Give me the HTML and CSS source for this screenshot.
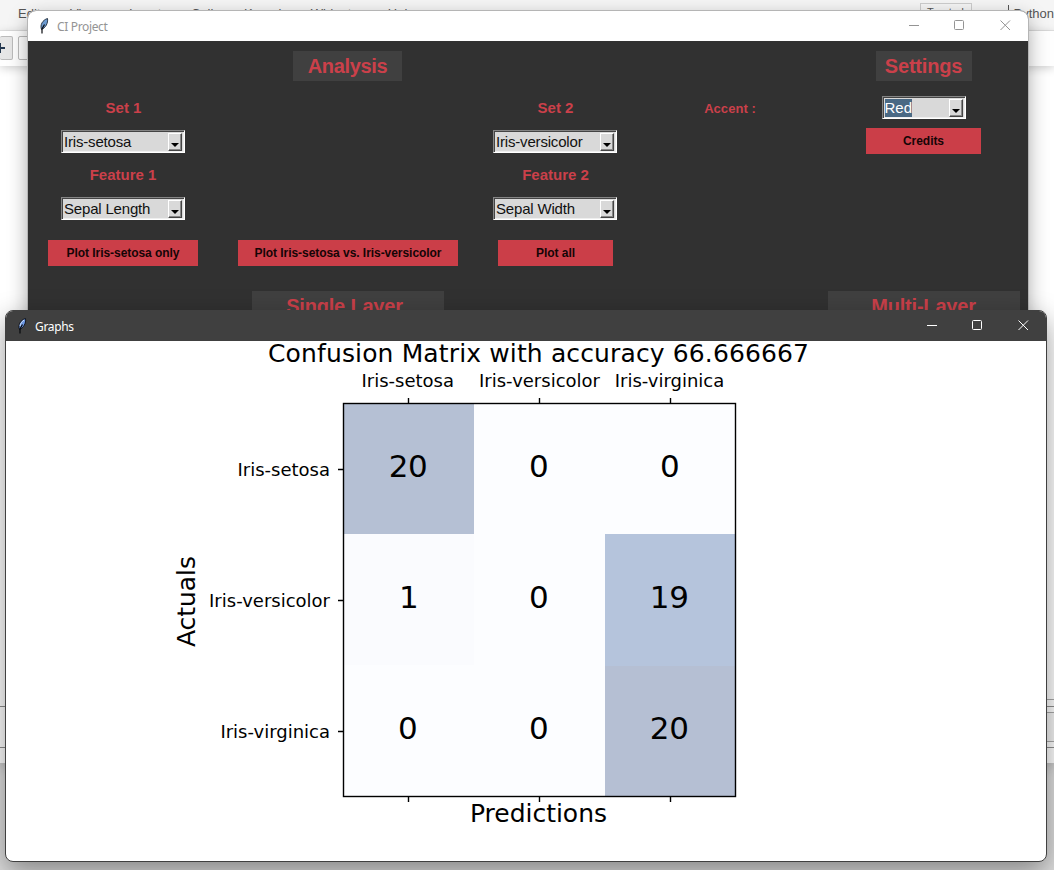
FILE: index.html
```html
<!DOCTYPE html>
<html lang="en">
<head>
<meta charset="utf-8">
<title>CI Project</title>
<link rel="stylesheet" href="styles.css">
</head>
<body>
<div class="desktop">
  <div class="notebook">
    <div class="menubar">
      <span class="m-edit">Edit</span><span class="m-view">View</span><span class="m-insert">Insert</span><span class="m-cell">Cell</span><span class="m-kernel">Kernel</span><span class="m-widgets">Widgets</span><span class="m-help">Help</span>
      <span class="trusted">Trusted</span><span class="kernel-name">Python</span>
    </div>
    <div class="toolbar">
      <span class="tool add"><svg class="plus" viewBox="0 0 12 12"><path d="M-5 6H5M0 1V11"/></svg></span>
      <span class="tool"></span>
    </div>
    <div class="cells"></div>
    <div class="cell-edge"></div>
    <div class="cell-rows"><div class="cell-input"></div></div>
  </div>

  <div class="window app">
    <div class="titlebar">
      <svg class="feather" viewBox="0 0 10 16"><path d="M2.500 11.500C.8 7 3.500 2 8.500.5C9.300 5 6.500 10 2.500 11.500Z" fill="#6c9bd0" stroke="#1c2836" stroke-width=".9"/><path d="M5.500 6.500L3 11V15.500" fill="none" stroke="#090b10" stroke-width="1.200"/></svg>
      <span class="title">CI Project</span>
      <svg class="controls" viewBox="0 0 102 12"><path d="M0 6.500H10M91.500 1.500L101 11M101 1.500L91.500 11"/><rect x="45.500" y="1.500" width="9" height="9" rx="1"/></svg>
    </div>
    <div class="panel">
      <h2 class="heading c2 r1 analysis">Analysis</h2>
      <h2 class="heading c5 r1 settings">Settings</h2>
      <span class="label c1 r2">Set 1</span>
      <span class="label c3 r2">Set 2</span>
      <span class="label small c4 r2">Accent :</span>
      <div class="combo short c5 r2"><span class="value"><mark>Red</mark></span><span class="arrow"></span></div>
      <div class="combo c1 r3"><span class="value">Iris-setosa</span><span class="arrow"></span></div>
      <div class="combo c3 r3"><span class="value">Iris-versicolor</span><span class="arrow"></span></div>
      <div class="button w115 credits c5 r3">Credits</div>
      <span class="label c1 r4">Feature 1</span>
      <span class="label c3 r4">Feature 2</span>
      <div class="combo c1 r5"><span class="value">Sepal Length</span><span class="arrow"></span></div>
      <div class="combo c3 r5"><span class="value">Sepal Width</span><span class="arrow"></span></div>
      <div class="button w150 c1 r6">Plot Iris-setosa only</div>
      <div class="button w220 c2 r6">Plot Iris-setosa vs. Iris-versicolor</div>
      <div class="button w115 c3 r6">Plot all</div>
      <h2 class="heading wide single c2 r7">Single Layer</h2>
      <h2 class="heading wide c5 r7">Multi-Layer</h2>
    </div>
  </div>

  <div class="window graphs">
    <div class="titlebar">
      <svg class="feather" viewBox="0 0 10 16"><path d="M2.500 11.500C.8 7 3.500 2 8.500.5C9.300 5 6.500 10 2.500 11.500Z" fill="#6f9ae6" stroke="#080b14" stroke-width=".9"/><path d="M5.500 6.500L3 11V15.500" fill="none" stroke="#05070b" stroke-width="1.200"/><path d="M3 8C3.300 5.500 5 3.500 7 2" fill="none" stroke="#dceaff" stroke-width=".9"/></svg>
      <span class="title">Graphs</span>
      <svg class="controls" viewBox="0 0 102 12"><path d="M0 6.500H10M91.500 1.500L101 11M101 1.500L91.500 11"/><rect x="45.500" y="1.500" width="9" height="9" rx="1"/></svg>
    </div>
    <svg class="chart" viewBox="6 341 1040 520">
      <g shape-rendering="crispEdges">
        <rect x="343" y="403" width="392" height="394" fill="#fcfdff"/>
        <rect x="343" y="534" width="131" height="131" fill="#fafbfe"/>
        <rect x="343" y="403" width="131" height="131" fill="#b5c0d4"/>
        <rect x="605" y="534" width="130" height="132" fill="#b5c4dc"/>
        <rect x="605" y="666" width="130" height="131" fill="#b5bfd3"/>
      </g>
      <rect class="axis" x="343.500" y="403.500" width="392" height="393"/>
      <path class="axis" d="M408.500 403V398M539.500 403V398M670.500 403V398M408.500 797V802M539.500 797V802M670.500 797V802M343 469.500H338M343 600.500H338M343 731.500H338"/>
      <g class="big">
        <text x="538.500" y="362" textLength="541">Confusion Matrix with accuracy 66.666667</text>
        <text x="538.500" y="822" textLength="137">Predictions</text>
        <text transform="translate(195 601.500) rotate(-90)" textLength="91">Actuals</text>
      </g>
      <g class="tick">
        <text x="407.700" y="387">Iris-setosa</text><text x="539.500" y="387">Iris-versicolor</text><text x="669.500" y="387">Iris-virginica</text>
      </g>
      <g class="tick side">
        <text x="330" y="476">Iris-setosa</text><text x="330" y="607">Iris-versicolor</text><text x="330" y="738">Iris-virginica</text>
      </g>
      <g class="num">
        <text x="408" y="477">20</text><text x="538.700" y="477">0</text><text x="669.700" y="477">0</text>
        <text x="408.700" y="608">1</text><text x="538.700" y="608">0</text><text x="669.200" y="608">19</text>
        <text x="407.700" y="739">0</text><text x="538.700" y="739">0</text><text x="669.200" y="739">20</text>
      </g>
    </svg>
  </div>
</div>
</body>
</html>
```
FILE: styles.css
```css
* { box-sizing: border-box; }
body { margin: 0; font-family: "Liberation Sans", sans-serif; }
.desktop { position: relative; width: 1054px; height: 870px; overflow: hidden; background: #dedede; }

.notebook { height: 763px; display: flex; flex-direction: column; background: #fff; box-shadow: 0 2px 14px rgba(0,0,0,.25); }
.menubar { display: flex; height: 31px; padding: 5px 0 0 18px; background: #f5f5f5; border-bottom: 1px solid #e3e3e3; font-size: 13px; line-height: 17px; color: #555; white-space: nowrap; }
.m-edit { width: 52px; }
.m-view { width: 59px; }
.m-insert { width: 62px; }
.m-cell { width: 53px; }
.m-kernel { width: 67px; }
.m-widgets { width: 77px; }
.m-help { width: 532px; }
.trusted { width: 52px; height: 20px; margin-top: -2px; border: 1px solid #ccc; font-size: 11px; line-height: 17px; text-align: center; }
.kernel-name { height: 17px; margin-left: 36px; padding-left: 5px; border-left: 1px solid #555; }
.toolbar { display: flex; gap: 5px; height: 35px; padding-top: 5px; background: #fefefe; box-shadow: 0 2px 9px rgba(0,0,0,.2); }
.tool { width: 40px; height: 24px; border: 1px solid #bbb; border-radius: 2px; background: #fff; }
.tool.add { width: 13px; padding-top: 5px; border-left: 0; background: #e6e6e6; }
.plus { display: block; width: 12px; height: 12px; fill: none; stroke: #24384f; stroke-width: 2; }
.cells { flex: 1; }
.cell-edge { height: 7px; margin-left: 50px; border-top: 1px solid #aaa; }
.cell-rows { height: 42px; margin-bottom: 15px; padding: 5px 0; border: solid #8f8f8f; border-width: 1px 0; background: #fff; }
.cell-input { height: 30px; margin-left: 50px; border: solid #aaa; border-width: 1px 0; background: #f5f5f5; }

.window { position: absolute; }
.titlebar { display: flex; align-items: center; height: 30px; font-family: "Noto Sans", sans-serif; font-size: 12px; letter-spacing: -.35px; }
.feather { width: 10px; height: 16px; margin-bottom: 1px; overflow: visible; }
.title { flex: 1; }
.controls { width: 102px; height: 12px; margin-bottom: 2px; fill: none; stroke: currentColor; overflow: visible; }

.app { left: 28px; top: 11px; width: 1000px; height: 420px; border-radius: 8px 8px 0 0; background: #313131; box-shadow: 0 0 0 1px #b5b5b5, 0 7px 20px rgba(0,0,0,.36); }
.app .titlebar { padding: 0 17px 0 11px; border-radius: 8px 8px 0 0; background: #fff; color: #949494; }
.app .title { padding-left: 8px; }
.panel { display: grid; grid-template-columns: 190px 260px 155px 194px 193px; grid-template-rows: 50px 33px 35px 32px 35px 54px 52px; place-items: center; }
.r1 { grid-row: 1; } .r2 { grid-row: 2; } .r3 { grid-row: 3; } .r4 { grid-row: 4; }
.r5 { grid-row: 5; } .r6 { grid-row: 6; } .r7 { grid-row: 7; }
.c1 { grid-column: 1; } .c2 { grid-column: 2; } .c3 { grid-column: 3; } .c4 { grid-column: 4; } .c5 { grid-column: 5; }
.heading { height: 30px; margin: 0; background: #404040; color: #cb404a; font-size: 20px; line-height: 31px; text-align: center; letter-spacing: -.2px; }
.analysis { width: 109px; margin-right: 1px; letter-spacing: -.35px; }
.settings { width: 96px; }
.wide { width: 192px; }
.single { padding-right: 7px; }
.label { color: #cb404a; font-size: 15px; font-weight: bold; line-height: 18px; }
.small { padding-top: 2px; font-size: 13px; letter-spacing: .05px; }
.label.c1.r2 { padding-left: 1px; }
.button { height: 26px; background: #cb3e48; color: #150506; font-size: 12px; font-weight: bold; line-height: 26px; text-align: center; white-space: nowrap; letter-spacing: -.05px; }
.credits { margin-bottom: 1px; }
.w115 { width: 115px; }
.w150 { width: 150px; }
.w220 { width: 220px; }
.combo { display: flex; width: 124px; height: 23px; border: 1px solid; border-color: #858585 #fff #fff #858585; box-shadow: inset 1px 1px #444, inset -1px -1px #eee; padding: 2px; background: #d9d9d9; color: #111; font-size: 15px; line-height: 17px; letter-spacing: -.18px; }
.combo.c3 { margin-right: 1px; }
.short { width: 84px; letter-spacing: 0; }
.value { flex: 1; white-space: nowrap; }
.combo mark { display: inline-block; height: 18px; background: #4a6984; color: #fff; }
.arrow { display: flex; justify-content: center; align-items: flex-end; width: 14px; height: 18px; padding-bottom: 3px; border: 1px solid; border-color: #fff #444 #444 #fff; box-shadow: inset -1px -1px #888; }
.arrow::before { content: ""; border: solid transparent; border-width: 4px 4px 0; border-top-color: #000; }

.graphs { left: 5px; top: 310px; width: 1042px; height: 552px; overflow: hidden; border: 1px solid #404040; border-radius: 8px; background: #fff; box-shadow: 0 10px 28px rgba(0,0,0,.4); }
.graphs .titlebar { padding: 0 17px 0 11px; background: #404040; color: #fff; }
.graphs .title { padding-left: 8px; }
.chart { display: block; width: 1040px; height: 520px; font-family: "DejaVu Sans", sans-serif; text-anchor: middle; }
.axis { fill: none; stroke: #000; stroke-width: 1.4px; }
.big { font-size: 25px; }
.tick { font-size: 18px; }
.side { text-anchor: end; }
.num { font-size: 31px; letter-spacing: -.4px; }
```
